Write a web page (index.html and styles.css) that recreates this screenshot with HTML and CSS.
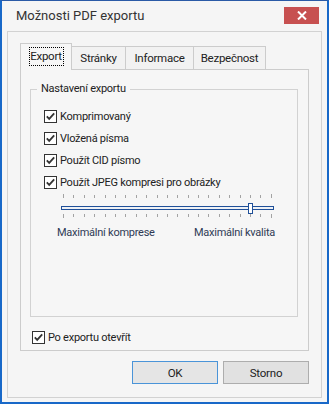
FILE: index.html
```html
<!DOCTYPE html>
<html lang="cs">
<head>
<meta charset="utf-8">
<title>Možnosti PDF exportu</title>
<link rel="stylesheet" href="styles.css">
</head>
<body>
<div class="window">
  <div class="titlebar">
    <span class="title">Možnosti PDF exportu</span>
    <div class="close">
      <svg width="10" height="9" viewBox="0 0 10 9"><path d="M1 0.5 L9 8.5 M9 0.5 L1 8.5" stroke="#fff" stroke-width="2"/></svg>
    </div>
  </div>
  <div class="frame">
    <div class="tabs">
      <div class="tab active w-export"><span class="focus">Export</span></div>
      <div class="tab w-stranky">Stránky</div>
      <div class="tab w-info">Informace</div>
      <div class="tab w-bezp">Bezpečnost</div>
    </div>
    <div class="panel">
      <fieldset class="group">
        <legend>Nastavení exportu</legend>
        <div class="row"><span class="box"><svg width="13" height="13" viewBox="0 0 13 13"><rect x="0.5" y="0.5" width="12" height="12" fill="#fff" stroke="#333"/><path d="M2.8 6.4 L5.2 8.9 L10.2 3.4" fill="none" stroke="#333" stroke-width="1.8"/></svg></span>Komprimovaný</div>
        <div class="row"><span class="box"><svg width="13" height="13" viewBox="0 0 13 13"><rect x="0.5" y="0.5" width="12" height="12" fill="#fff" stroke="#333"/><path d="M2.8 6.4 L5.2 8.9 L10.2 3.4" fill="none" stroke="#333" stroke-width="1.8"/></svg></span>Vložená písma</div>
        <div class="row"><span class="box"><svg width="13" height="13" viewBox="0 0 13 13"><rect x="0.5" y="0.5" width="12" height="12" fill="#fff" stroke="#333"/><path d="M2.8 6.4 L5.2 8.9 L10.2 3.4" fill="none" stroke="#333" stroke-width="1.8"/></svg></span>Použít CID písmo</div>
        <div class="row"><span class="box"><svg width="13" height="13" viewBox="0 0 13 13"><rect x="0.5" y="0.5" width="12" height="12" fill="#fff" stroke="#333"/><path d="M2.8 6.4 L5.2 8.9 L10.2 3.4" fill="none" stroke="#333" stroke-width="1.8"/></svg></span>Použít JPEG kompresi pro obrázky</div>
        <div class="slider">
          <div class="ticks">
            <i class="long"></i><i></i><i></i><i></i><i></i><i></i><i></i><i></i><i></i><i></i><i></i><i></i><i></i><i></i><i></i><i></i><i></i><i></i><i></i><i></i><i class="long"></i>
          </div>
          <div class="track"><span class="thumb"></span></div>
          <div class="ticks bottom">
            <i class="long"></i><i></i><i></i><i></i><i></i><i></i><i></i><i></i><i></i><i></i><i></i><i></i><i></i><i></i><i></i><i></i><i></i><i></i><i></i><i></i><i class="long"></i>
          </div>
        </div>
        <div class="scale-labels">
          <span>Maximální komprese</span>
          <span>Maximální kvalita</span>
        </div>
      </fieldset>
      <div class="row open"><span class="box"><svg width="13" height="13" viewBox="0 0 13 13"><rect x="0.5" y="0.5" width="12" height="12" fill="#fff" stroke="#333"/><path d="M2.8 6.4 L5.2 8.9 L10.2 3.4" fill="none" stroke="#333" stroke-width="1.8"/></svg></span>Po exportu otevřít</div>
    </div>
    <div class="buttons">
      <button class="btn default">OK</button>
      <button class="btn">Storno</button>
    </div>
  </div>
</div>
</body>
</html>
```
FILE: styles.css
```css
* { box-sizing: border-box; }
html, body { margin: 0; padding: 0; background: #f5f5f5; }
body {
  font-family: Roboto, "Noto Sans", sans-serif;
  font-size: 11px;
  letter-spacing: -0.25px;
  color: #222;
}
.window {
  width: 329px;
  height: 404px;
  background: #f5f5f5;
  border: 2px solid #1868c8;
  border-top: 1px solid #2a5aa6;
  display: flex;
  flex-direction: column;
}
.titlebar {
  height: 30px;
  display: flex;
  align-items: flex-start;
  justify-content: space-between;
  padding-left: 14px;
}
.title {
  font-size: 13px;
  letter-spacing: 0;
  line-height: 30px;
  color: #333;
}
.close {
  width: 35px;
  height: 17px;
  margin-top: 6px;
  margin-right: 8px;
  background: #c75050;
  display: flex;
  align-items: center;
  justify-content: center;
}
.frame {
  height: 367px;
  margin: 0 5px;
  border: 1px solid #d2d2d2;
  padding: 11px 12px 0 12px;
  display: flex;
  flex-direction: column;
}
.tabs {
  display: flex;
  align-items: flex-end;
  height: 26px;
  position: relative;
  z-index: 1;
}
.tab {
  height: 23px;
  border: 1px solid #cccccc;
  border-bottom: none;
  background: #f2f2f2;
  display: flex;
  align-items: center;
  justify-content: center;
  margin-left: -1px;
  font-size: 11.5px;
}
.tab.active {
  height: 27px;
  margin-bottom: -1px;
  margin-left: 0;
  background: #f6f6f6;
  align-items: flex-start;
  padding-top: 3px;
  position: relative;
  z-index: 2;
}
.w-export { width: 52px; }
.w-stranky { width: 55px; }
.w-info { width: 69px; }
.w-bezp { width: 73px; }
.focus {
  display: inline-block;
  width: 35px;
  text-align: center;
  height: 19px;
  line-height: 17px;
  border: 1px dotted #000;
}
.panel {
  height: 282px;
  border: 1px solid #cccccc;
  background: #f6f6f6;
  padding: 11px 10px 0 9px;
}
.group {
  margin: 0;
  border: 1px solid #d2d2d2;
  padding: 8px 13px 75px 13px;
  min-width: 0;
}
.group legend {
  padding: 0 4px;
  margin-left: -7px;
  line-height: 16px;
}
.row {
  height: 22px;
  display: flex;
  align-items: center;
}
.box {
  width: 13px;
  height: 13px;
  margin-right: 3px;
  display: flex;
}
.slider {
  width: 213px;
  margin: 1px 0 0 17px;
}
.ticks {
  display: flex;
  justify-content: space-between;
  align-items: flex-end;
  padding: 0 2px;
  height: 4px;
}
.ticks.bottom { align-items: flex-start; }
.ticks i {
  display: block;
  width: 1px;
  height: 3px;
  background: #a3a3a3;
}
.ticks i.long { height: 4px; }
.track {
  position: relative;
  height: 4px;
  margin: 8px 0 4px 0;
  border: 1px solid #1f4f98;
  background: #eef1f5;
}
.thumb {
  position: absolute;
  left: 186px;
  top: -4px;
  width: 5px;
  height: 11px;
  border: 1px solid #1f4f98;
  background: #fff;
}
.scale-labels {
  display: flex;
  justify-content: space-between;
  width: 218px;
  margin: 7px 0 0 13px;
  line-height: 16px;
  color: #2f3a55;
}
.row.open {
  margin: 9px 0 0 2px;
}
.buttons {
  display: flex;
  justify-content: flex-end;
  gap: 5px;
  margin-top: 10px;
}
.btn {
  width: 86px;
  height: 23px;
  border: 1px solid #adadad;
  background: #e1e1e1;
  font-family: Roboto, "Noto Sans", sans-serif;
  font-size: 11.5px;
  letter-spacing: -0.2px;
  color: #222;
  padding: 0;
}
.btn.default {
  border-color: #4a94d8;
  background: #e5e5e5;
}
```
